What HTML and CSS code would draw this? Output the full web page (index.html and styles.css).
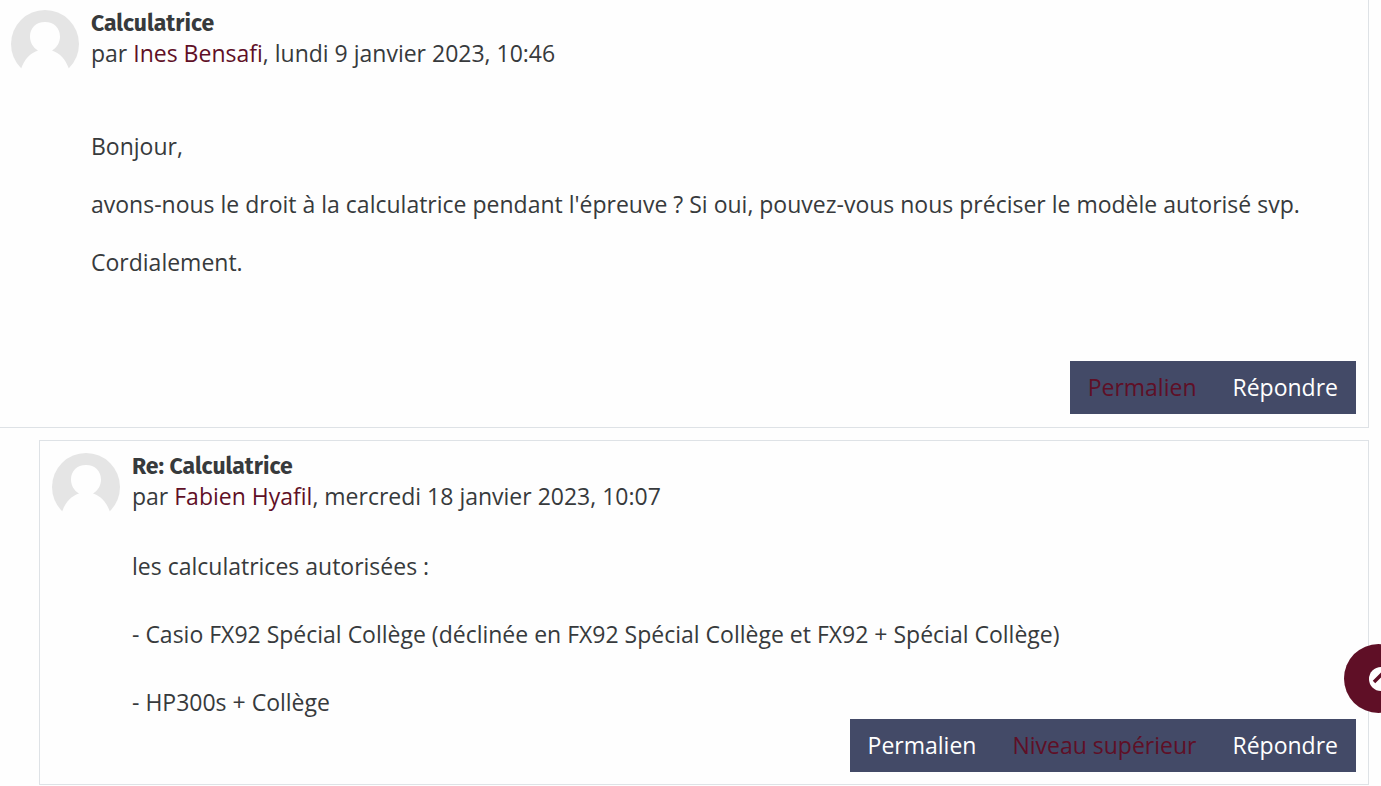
FILE: index.html
```html
<!DOCTYPE html>
<html lang="fr">
<head>
  <meta charset="UTF-8" />
  <meta name="viewport" content="width=device-width, initial-scale=1.0"/>
  <title>Calculatrice</title>
  <link rel="stylesheet" href="styles.css">
</head>
<body>
  <main class="discussion">
    <article class="post first-post">
      <header class="post-header">
        <svg class="avatar" viewBox="0 0 68 68" aria-hidden="true">
          <circle cx="34" cy="34" r="34" fill="#e5e5e5"/>
          <path d="M34 12c-9 0-15 6-15 14.500 0 6 3 11 8 14C19 43 13 50 10 59v9h48v-9c-3-9-9-16-17-18.500 5-3 8-8 8-14C49 18 43 12 34 12z" fill="#fefefe"/>
        </svg>
        <div class="post-heading">
          <h3>Calculatrice</h3>
          <div class="byline">par <a href="#">Ines Bensafi</a>, <time>lundi 9 janvier 2023, 10:46</time></div>
        </div>
      </header>
      <div class="post-content">
        <p>Bonjour,</p>
        <p>avons-nous le droit à la calculatrice pendant l'épreuve ? Si oui, pouvez-vous nous préciser le modèle autorisé svp.</p>
        <p>Cordialement.</p>
      </div>
      <div class="post-actions">
        <a href="#" class="active">Permalien</a>
        <a href="#">Répondre</a>
      </div>
    </article>

    <article class="post reply">
      <header class="post-header">
        <svg class="avatar" viewBox="0 0 68 68" aria-hidden="true">
          <circle cx="34" cy="34" r="34" fill="#e5e5e5"/>
          <path d="M34 12c-9 0-15 6-15 14.500 0 6 3 11 8 14C19 43 13 50 10 59v9h48v-9c-3-9-9-16-17-18.500 5-3 8-8 8-14C49 18 43 12 34 12z" fill="#fefefe"/>
        </svg>
        <div class="post-heading">
          <h3>Re: Calculatrice</h3>
          <div class="byline">par <a href="#">Fabien Hyafil</a>, <time>mercredi 18 janvier 2023, 10:07</time></div>
        </div>
      </header>
      <div class="post-content">
        les calculatrices autorisées :<br><br>
        - Casio FX92 Spécial Collège (déclinée en FX92 Spécial Collège et FX92 + Spécial Collège)<br><br>
        - HP300s + Collège
      </div>
      <div class="post-actions">
        <a href="#">Permalien</a>
        <a href="#" class="active">Niveau supérieur</a>
        <a href="#">Répondre</a>
      </div>
    </article>
  </main>

  <button class="back-to-top" aria-label="Haut de page">
    <svg viewBox="0 0 24 24" aria-hidden="true">
      <circle cx="12" cy="12" r="12" fill="#fff"/>
      <path d="M5 15l7-7 7 7" fill="none" stroke="#5f0f26" stroke-width="3.500"/>
    </svg>
  </button>
</body>
</html>
```

FILE: styles.css
```css
:root {
  --page: #fefefe;
  --text: #373a3c;
  --link: #5f0f26;
  --border: #dee2e6;
  --bar: #434a67;
}

* {
  box-sizing: border-box;
}

body {
  margin: 0;
  background-color: var(--page);
  color: var(--text);
  font-family: 'Open Sans', sans-serif;
  font-size: 23px;
  line-height: 34px;
  overflow-x: hidden;
}

a {
  color: var(--link);
  text-decoration: none;
}

.discussion {
  padding-right: 12px;
}

.post {
  padding: 12px;
  border: 1px solid var(--border);
}

.first-post {
  padding: 10px 12px 13px 11px;
  border-top: none;
  border-left: none;
}

.reply {
  margin: 12px 0 0 39px;
}

.post-header {
  display: flex;
  gap: 12px;
}

.avatar {
  width: 68px;
  height: 68px;
  flex: none;
}

h3 {
  margin: 0;
  font-family: 'Fira Sans', 'Noto Sans', sans-serif;
  font-size: 23px;
  font-weight: 700;
  line-height: 27px;
}

.byline {
  line-height: 32px;
}

.post-content {
  padding-left: 80px;
  margin-top: 28px;
}

.first-post .post-content {
  padding: 23px 0 82px 80px;
}

.post-content p {
  margin: 0 0 24px;
}

.post-content p:last-child {
  margin-bottom: 0;
}

.post-actions {
  display: flex;
  width: fit-content;
  margin-left: auto;
  line-height: 33px;
  background-color: var(--bar);
}

.post-actions a {
  padding: 10px 18px;
  color: #fff;
}

.post-actions a.active {
  color: var(--link);
}

.back-to-top {
  position: fixed;
  right: -32px;
  bottom: 73px;
  width: 69px;
  height: 69px;
  padding: 0 0 0 25px;
  border: none;
  border-radius: 50%;
  background-color: var(--link);
  cursor: pointer;
}

.back-to-top svg {
  display: block;
  width: 24px;
  height: 24px;
}
```
